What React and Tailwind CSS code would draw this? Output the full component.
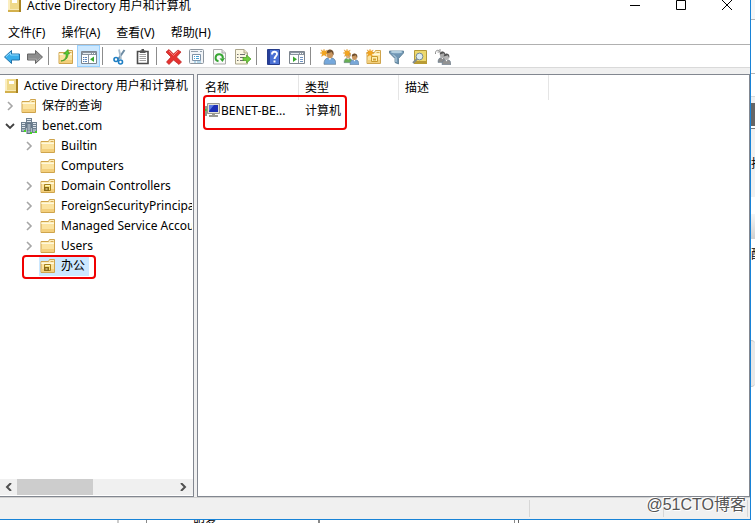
import React from "react";

function Icon({ children, className = "" }) {
  return (
    <svg viewBox="0 0 16 16" className={`size-4 shrink-0 ${className}`} aria-hidden="true">
      {children}
    </svg>
  );
}

const Console = () => (
  <Icon>
    <path d="M2 1h12v14H2z" fill="#b08c28" />
    <path d="M1 1h11v12H1z" fill="#efd98a" />
    <path d="M1 1h2v12H1z" fill="#fbeec0" />
    <path d="M12 1h2v14h-2z" fill="#a98423" />
    <path d="M1 12h11v3H1z" fill="#d3b04c" />
    <path d="M5 3h5v3H5z" fill="#fff" />
    <path d="M1 12h11v1H1z" fill="#f9eab4" />
  </Icon>
);

const FolderShape = () => (
  <>
    <path d="M1 3.500h7.500l1-2h5v13H1z" fill="#fbe3a0" stroke="#cfa44c" />
    <path d="M1.500 4h7.500l1-2H14v4H1.500z" fill="#fceebd" />
    <path d="M10.500 3.500h3" stroke="#d8ac50" />
    <path d="M1.500 5.500h12.500" stroke="#fff8dc" />
    <path d="M1.500 11h12.500v3H1.500z" fill="#f3cf7c" />
  </>
);

const Folder = () => (
  <Icon>
    <FolderShape />
  </Icon>
);

const OrgUnit = () => (
  <Icon>
    <FolderShape />
    <path d="M4.500 6.500h6v6h-6z" fill="#f5e07a" stroke="#a5811c" />
    <path d="M4 9h5v4H4z" fill="#8a6b16" />
    <path d="M5.500 10.500h2v1h-2z" fill="#fff5bd" />
    <path d="M5.500 7.500H10" stroke="#fff5bd" />
  </Icon>
);

const Domain = () => (
  <Icon>
    <path d="M5 0h6v10H5z" fill="#6f8090" />
    <path d="M0 4h5v10H0zM11 4h5v11h-5z" fill="#6f8090" />
    <path d="M5.500 5.500h5V16h-5z" fill="#5d6f80" />
    <path d="M6 1.500h4M6 3.500h4M1 5.500h3M1 7.500h3M1 9.500h3M12 5.500h3M12 7.500h3M12 9.500h3M6.500 7h3M6.500 9h3M6.500 11h3" stroke="#dde5ec" />
    <path d="M1 11h3v2H1zM12 11h3v3h-3zM6.500 12.500h3V15h-3z" fill="#a3b2bf" />
    <path d="M3 12h2v2H3zM9 14h2v2H9zM14 13h2v2h-2z" fill="#45d622" />
  </Icon>
);

const Computer = () => (
  <Icon>
    <path d="M0 3h2v10H0z" fill="#8d9a8f" />
    <path d="M2.500 .500h12v10h-12z" fill="#e4e1d4" stroke="#9b9a91" />
    <path d="M4 2h9v7H4z" fill="#1d30b5" />
    <path d="M4 2h5L4 8z" fill="#5c7be4" />
    <path d="M7 11h3v1h3v2H4v-2h3z" fill="#9b9a91" />
    <path d="M0 6h1.500v2H0z" fill="#38c72f" />
  </Icon>
);

const Arrow = ({ forward = false }) => (
  <Icon className={forward ? "rotate-180" : ""}>
    <path
      d="M.500 8 7.500 1.500V5h8v6h-8v3.500z"
      fill={forward ? "#8d8d8d" : "#38adea"}
      stroke={forward ? "#666" : "#2173aa"}
      strokeLinejoin="round"
    />
    <path d="M2 7.700 6.500 3.700V6h8" fill="none" stroke={forward ? "#a9a9a9" : "#8edaff"} />
  </Icon>
);

const UpFolder = () => (
  <Icon>
    <FolderShape />
    <path d="M3 12C7 11 8.500 8.500 8 5H5.500L10 .500V2l1.500 3H10c0 4-2.500 7-7 7z" fill="#57c92e" stroke="#3a9420" strokeWidth=".7" />
  </Icon>
);

const TreeWindow = ({ play = false }) => (
  <Icon>
    <path d="M.500 2.500h15v12H.500z" fill="#fff" stroke="#7d858e" />
    <path d="M1 3h14v3H1z" fill="#8a949f" />
    <path d="M2 4.500h8" stroke="#e6ebf0" />
    <path d="M11 4h1v1h-1zM13 4h1v1h-1z" fill="#fff" />
    <path d={play ? "M9.500 6v8" : "M7.500 6v8"} stroke="#8a949f" />
    {play ? (
      <>
        <path d="m4 7.500 4 2.800-4 2.700z" fill="#39a82d" />
        <path d="M11 8.500h3M11 10.500h3M11 12.500h3" stroke="#7095c4" />
      </>
    ) : (
      <>
        <path d="M2 8.500h4M2 10.500h4M2 12.500h4" stroke="#5b83b8" strokeDasharray="1 .6 3" />
        <path d="m13 7.500-4 2.800 4 2.700z" fill="#39a82d" />
      </>
    )}
  </Icon>
);

const Cut = () => (
  <Icon>
    <path d="M12.500 1 6 10.500" stroke="#6e8ca4" strokeWidth="2" />
    <path d="M7 .500 9 10" stroke="#a9bccb" strokeWidth="1.800" />
    <circle cx="4" cy="10.500" r="2" fill="none" stroke="#1f7fc4" strokeWidth="1.600" />
    <circle cx="8.500" cy="13" r="2" fill="none" stroke="#1f7fc4" strokeWidth="1.600" />
  </Icon>
);

const Clipboard = () => (
  <Icon>
    <path d="M2.500 2.500h10.500v12H2.500z" fill="#fff" stroke="#4c4c4c" strokeWidth="1.600" />
    <path d="M5 1.500h1.500V0h2.500v1.500h1.500V4H5z" fill="#555" />
    <path d="M4.500 5.500h6.500M4.500 7.500h6.500M4.500 9.500h6.500M4.500 11.500h6.500" stroke="#a2a2a2" />
  </Icon>
);

const Delete = () => (
  <Icon>
    <path d="M0 3 3 .500 7.500 5l4.500-4 3 2-4.500 5 5 5L13 15.500 7.500 11 3 15.500.500 13 5 8z" fill="#e5322f" stroke="#b9201f" strokeWidth=".7" />
    <path d="M3 2 7.500 6.500 12 2" fill="none" stroke="#f5807a" />
  </Icon>
);

const Properties = () => (
  <Icon>
    <rect x=".5" y=".5" width="14" height="14" rx="1" fill="#f1f4f7" stroke="#8d969f" />
    <path d="M2 2.500h7M11 2.500h2" stroke="#93a0ad" />
    <path d="M3.500 5.500h8v6h-8z" fill="#fff" stroke="#7e93a8" />
    <path d="M5 7.500h1M7 7.500h3M5 9.500h1M7 9.500h3" stroke="#45a1d5" />
    <path d="M5 13h2M8 13h4" stroke="#75b7dc" />
  </Icon>
);

const Refresh = () => (
  <Icon>
    <path d="M1.500 .500h8.500L13.500 4v11h-12z" fill="#fafafa" stroke="#aaa" />
    <path d="M10 .500V4h3.500" fill="#ddd" stroke="#aaa" />
    <path d="M6.500 12.300A3.600 3.600 0 1 1 10.800 9" fill="none" stroke="#36a532" strokeWidth="2" />
    <path d="m7.500 9.500 5.500-.5-2.500 4z" fill="#36a532" />
  </Icon>
);

const Export = () => (
  <Icon>
    <path d="M.500.500h8.500L12.500 4v11H.500z" fill="#fbf7e2" stroke="#aaa58b" />
    <path d="M9 .500V4h3.500" fill="#eee5bf" stroke="#aaa58b" />
    <path d="M2 5.500h1.500M5 5.500h5M2 8.500h1.500M5 8.500h4M2 11.500h1.500M5 11.500h4" stroke="#717171" />
    <path d="M8 8.500h3.500V6L16 10l-4.500 4v-2.500H8z" fill="#71cf3f" stroke="#489b23" strokeWidth=".7" />
  </Icon>
);

const Help = () => (
  <Icon>
    <path d="M1.500.500h12v15h-12z" fill="#4a70d4" stroke="#263c8b" />
    <path d="M2 1h2v14H2z" fill="#263f9b" />
    <path d="M6 5.500C6 2 11 2 11 5c0 2-2.500 2.300-2.500 5" fill="none" stroke="#fff" strokeWidth="1.900" />
    <path d="M7.500 11.500h2v2h-2z" fill="#fff" />
  </Icon>
);

const Spark = () => (
  <path d="m4 0 .8 2.200L7.300 1 6 3.200l2 1.300-2.300.5.8 2.500L4 6 1.500 7.500l.8-2.700L0 4l2.300-.8L1 .800l2.300 1.400z" fill="#f3a51f" stroke="#d98a1c" strokeWidth=".3" />
);

const Head = ({ x, y, shirt, hair, skin, s = 1 }) => (
  <g transform={`translate(${x} ${y}) scale(${s})`}>
    <path d="M0 13c0-4 1.500-5.500 5-5.500s5 1.500 5 5.500z" fill={shirt} stroke="#647b91" strokeWidth=".6" />
    <path d="M3.500 7 5 9.500 6.500 7z" fill="#fff" />
    <ellipse cx="5" cy="4.300" rx="2.800" ry="3.600" fill={skin} />
    <path d="M2 4C1.500-.500 8-.800 8.200 3.500L8 5.500 6.500 2.500z" fill={hair} />
  </g>
);

const NewUser = () => (
  <Icon>
    <Head x={4} y={0} shirt="#75a8dc" hair="#71502f" skin="#c9965f" s={1.18} />
    <Spark />
  </Icon>
);

const NewGroup = () => (
  <Icon>
    <Head x={1} y={3} shirt="#68ae55" hair="#9b8065" skin="#d4ad7e" s={0.82} />
    <Head x={7} y={4} shirt="#78a7d8" hair="#71502f" skin="#c9965f" s={0.9} />
    <Spark />
  </Icon>
);

const NewUnit = () => (
  <Icon>
    <FolderShape />
    <path d="M5.500 7.500h6v5h-6z" fill="#fff0b0" stroke="#c99a2e" />
    <path d="M7 9.500h3v2H7z" fill="#d0a139" />
    <Spark />
  </Icon>
);

const Filter = () => (
  <Icon>
    <path d="M.500 2h14v2L9.500 9.500V15L6 13.500v-4L.500 4z" fill="#7096b4" stroke="#55788f" strokeWidth=".8" />
    <ellipse cx="7.500" cy="3" rx="6" ry="1.300" fill="#b3cfdf" />
    <path d="m4 5.500 3 3V13" stroke="#c6dce8" fill="none" />
  </Icon>
);

const Find = () => (
  <Icon>
    <path d="M2.500 1.500h12v12h-12z" fill="#edd96f" stroke="#b69a38" />
    <path d="M2 12h13v3H2z" fill="#b99c35" />
    <circle cx="7.500" cy="7.500" r="3.400" fill="#dcecf3" stroke="#798b94" />
    <path d="m5 10-4 4" stroke="#818c91" strokeWidth="2" />
  </Icon>
);

const AddToGroup = () => (
  <Icon>
    <Head x={3} y={2} shirt="#8b8b8b" hair="#555" skin="#aaa" s={0.88} />
    <Head x={7} y={4} shirt="#929292" hair="#555" skin="#b5b5b5" s={0.9} />
    <path d="M.500 5C0 1.500 2.500 .500 4.500 2M5 0v3H2.500" fill="none" stroke="#8d8d8d" />
  </Icon>
);

const toolGroups = [
  [["后退", <Arrow />], ["前进", <Arrow forward />]],
  [["上一级", <UpFolder />], ["显示控制台树", <TreeWindow />, true]],
  [["剪切", <Cut />], ["复制", <Clipboard />]],
  [["删除", <Delete />], ["属性", <Properties />], ["刷新", <Refresh />], ["导出列表", <Export />]],
  [["帮助", <Help />], ["显示操作窗格", <TreeWindow play />]],
  [
    ["新建用户", <NewUser />],
    ["新建组", <NewGroup />],
    ["新建组织单位", <NewUnit />],
    ["筛选", <Filter />],
    ["查找", <Find />],
    ["添加到组", <AddToGroup />],
  ],
];

const treeItems = [
  { label: "保存的查询", icon: <Folder />, level: 1, arrow: "closed" },
  { label: "benet.com", icon: <Domain />, level: 1, arrow: "open" },
  { label: "Builtin", icon: <Folder />, level: 2, arrow: "closed" },
  { label: "Computers", icon: <Folder />, level: 2 },
  { label: "Domain Controllers", icon: <OrgUnit />, level: 2, arrow: "closed" },
  { label: "ForeignSecurityPrincipals", icon: <Folder />, level: 2, arrow: "closed" },
  { label: "Managed Service Accounts", icon: <Folder />, level: 2, arrow: "closed" },
  { label: "Users", icon: <Folder />, level: 2, arrow: "closed" },
  { label: "办公", icon: <OrgUnit />, level: 2, selected: true },
];

function TreeArrow({ state }) {
  return (
    <svg viewBox="0 0 10 10" className="size-2.5 shrink-0" aria-hidden="true">
      {state === "closed" && <path d="m3 1 4 4-4 4" fill="none" stroke="#a6a6a6" strokeWidth="1.600" />}
      {state === "open" && <path d="m1 3 4 4 4-4" fill="none" stroke="#404040" strokeWidth="1.800" />}
    </svg>
  );
}

function TitleBar() {
  return (
    <header className="-mt-2.5 flex h-[30px] shrink-0 items-center pl-[7px]">
      <Console />
      <h1 className="ml-1 flex-1 whitespace-nowrap pt-0.5">Active Directory 用户和计算机</h1>
      <button aria-label="最小化" className="flex h-full w-[46px] items-center justify-center">
        <svg viewBox="0 0 10 10" className="size-2.5"><path d="M0 5.500h10" stroke="#000" /></svg>
      </button>
      <button aria-label="最大化" className="flex h-full w-[46px] items-center justify-center">
        <svg viewBox="0 0 10 10" className="size-2.5"><path d="M.500.500h9v9h-9z" fill="none" stroke="#000" /></svg>
      </button>
      <button aria-label="关闭" className="flex h-full w-[46px] items-center justify-center">
        <svg viewBox="0 0 10 10" className="size-2.5"><path d="m0 0 10 10M10 0 0 10" stroke="#000" /></svg>
      </button>
    </header>
  );
}

function Toolbar() {
  return (
    <div role="toolbar" className="flex h-6 shrink-0 border-y border-t-[#b0b0b0] border-b-[#d9d9d9]">
      {toolGroups.map((group, index) => (
        <React.Fragment key={index}>
          {index > 0 && (
            <div className="w-2 py-0.5 pl-0.5">
              <div className="h-full w-px bg-[#8c8c8c]" />
            </div>
          )}
          {group.map(([label, icon, pressed]) => (
            <button
              key={label}
              aria-label={label}
              className={`flex w-[23px] items-center justify-center pt-0.5 ${pressed ? "border border-[#99d1ff] bg-[#cce8ff]" : ""}`}
            >
              {icon}
            </button>
          ))}
        </React.Fragment>
      ))}
    </div>
  );
}

function TreePane() {
  return (
    <nav className="flex w-[194px] shrink-0 flex-col border-y border-r border-[#828790] bg-white pb-px">
      <div className="min-h-0 flex-1 pr-px pt-px">
        <ul className="h-full overflow-hidden">
          <li>
            <button className="flex h-5 items-center gap-1 whitespace-nowrap pl-1">
              <Console />
              <span>Active Directory 用户和计算机</span>
            </button>
          </li>
          {treeItems.map(({ label, icon, level, arrow, selected }) => (
            <li key={label} className={level === 1 ? "pl-[5px]" : "pl-6"}>
              <button className="relative flex h-5 items-center gap-[5px] whitespace-nowrap">
                <TreeArrow state={arrow} />
                <span className={`flex h-5 items-center gap-[5px] px-px pr-1 ${selected ? "bg-[#cce8ff]" : ""}`}>
                  {icon}
                  <span>{label}</span>
                </span>
                {selected && <span className="absolute -top-px -bottom-[3px] -left-0.5 w-[74px] rounded-[4px] border-2 border-[#f00000]" />}
              </button>
            </li>
          ))}
        </ul>
      </div>
      <div className="flex h-4 shrink-0 bg-[#f0f0f0]">
        <button aria-label="向左滚动" className="flex w-[17px] items-center justify-center">
          <svg viewBox="0 0 8 8" className="size-2"><path d="M6 0 2 4l4 4" fill="none" stroke="#505050" strokeWidth="2" /></svg>
        </button>
        <div className="flex-1"><div className="h-full w-[49%] bg-[#cdcdcd]" /></div>
        <button aria-label="向右滚动" className="flex w-5 items-center justify-center">
          <svg viewBox="0 0 8 8" className="size-2"><path d="m2 0 4 4-4 4" fill="none" stroke="#505050" strokeWidth="2" /></svg>
        </button>
      </div>
    </nav>
  );
}

function ListPane() {
  return (
    <main className="relative min-w-0 flex-1 border border-[#828790] bg-white">
      <table className="ml-px w-[350px] table-fixed border-separate border-spacing-0 text-left">
        <thead>
          <tr className="h-[25px]">
            <th className="w-[100px] border-r border-[#e5e5e5] p-0 pl-1.5 font-normal">名称</th>
            <th className="w-[100px] border-r border-[#e5e5e5] p-0 pl-1.5 font-normal">类型</th>
            <th className="w-[150px] border-r border-[#e5e5e5] p-0 pl-1.5 font-normal">描述</th>
          </tr>
        </thead>
        <tbody>
          <tr className="h-[22px]">
            <td className="p-0 pl-1.5">
              <span className="flex items-center whitespace-nowrap"><Computer />BENET-BE...</span>
            </td>
            <td className="p-0 pl-1.5">计算机</td>
            <td className="p-0 pl-1.5" />
          </tr>
        </tbody>
      </table>
      <span className="absolute left-[5px] top-5 h-[35px] w-36 rounded-[4px] border-2 border-[#f00000]" />
    </main>
  );
}

function StatusBar() {
  return (
    <footer className="relative flex h-[22px] shrink-0 border-t border-[#d0d0d0] bg-[#f0f0f0] py-0.5 pr-0.5">
      <div className="flex-1 border-r border-[#d7d7d7]" />
      <div className="w-[134px] border-r border-[#d7d7d7]" />
      <div className="w-[84px] border-r border-[#d7d7d7]" />
      <span className="absolute -top-[3px] right-1 whitespace-nowrap font-['Liberation_Sans','Noto_Sans_CJK_SC',sans-serif] text-base leading-5 text-[#555] [text-shadow:-1px_-1px_0_#fff,1px_1px_0_#fff]">
        @51CTO博客
      </span>
    </footer>
  );
}

function WindowBehindRight() {
  return (
    <aside className="flex w-1 shrink-0 flex-col overflow-hidden bg-white">
      <div className="h-5 shrink-0 border-b border-[#b5b5b5] bg-[#f5f5f5]" />
      <div className="h-[54px] shrink-0 border-b border-[#b5b5b5]" />
      <div className="h-[23px] shrink-0 border-b border-[#d9d9d9]" />
      <div className="h-1.5 shrink-0 bg-[#f0f0f0]" />
      <div className="h-[23px] shrink-0 bg-[#666]" />
      <div className="h-[3px] shrink-0 border-b border-[#777]" />
      <div className="h-[68px] shrink-0 bg-[#f0f0f0] pt-[27px]"><span className="block w-4">找</span></div>
      <div className="h-[17px] shrink-0" />
      <div className="h-[25px] shrink-0 bg-linear-to-b from-[#f5f5f5] to-[#d0d0d0]" />
      <div className="h-[101px] shrink-0 pt-2"><span className="block w-4">配</span></div>
      <div className="h-[47px] shrink-0 rounded-r border-y border-[#c8c8c8] bg-[#e8e8e8]" />
    </aside>
  );
}

function WindowBehindBottom() {
  return (
    <div className="flex h-[3px] shrink-0 overflow-hidden bg-white">
      <div className="w-[119px] border-r-2 border-[#ccc]" />
      <div className="w-7 border-r border-[#888]" />
      <div className="w-[173px] border-r-2 border-[#888] pl-[46px] leading-none">服务</div>
      <div className="w-[195px] border-r border-[#888]" />
      <div className="w-1 border-r border-[#666]" />
    </div>
  );
}

export default function App() {
  return (
    <div className="flex h-screen flex-col overflow-hidden bg-white font-['Noto_Sans','Noto_Sans_CJK_SC',sans-serif] text-xs leading-4 text-black">
      <div className="flex min-h-0 flex-1">
        <div className="flex min-w-0 flex-1 flex-col border-r border-b border-[#1883d7]">
          <TitleBar />
          <div role="menubar" className="flex h-6 shrink-0 items-center gap-4 pl-2 pt-px">
            <button>文件(F)</button>
            <button>操作(A)</button>
            <button>查看(V)</button>
            <button>帮助(H)</button>
          </div>
          <Toolbar />
          <div className="flex min-h-0 flex-1 gap-[3px] bg-[#f0f0f0] pt-1.5">
            <TreePane />
            <ListPane />
          </div>
          <StatusBar />
        </div>
        <WindowBehindRight />
      </div>
      <WindowBehindBottom />
    </div>
  );
}
